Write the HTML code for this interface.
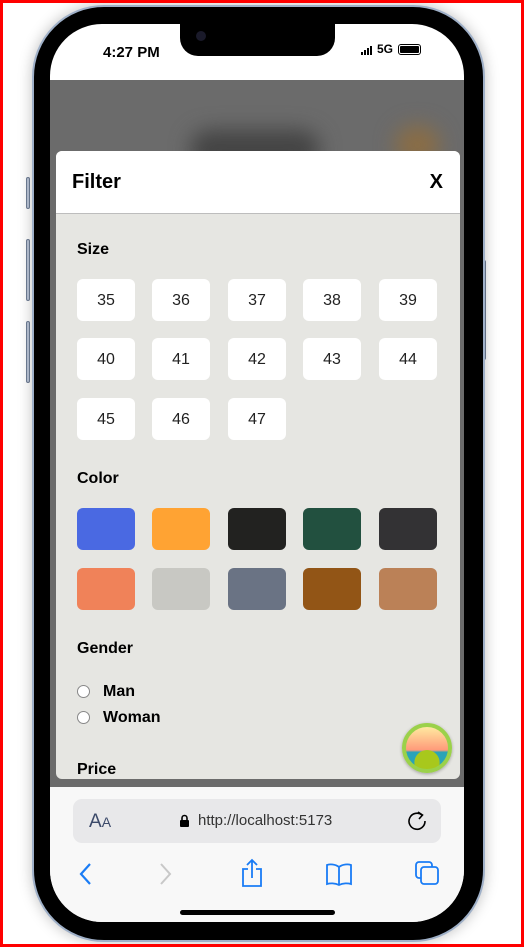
<!DOCTYPE html>
<html><head><meta charset="utf-8"><style>
*{margin:0;padding:0;box-sizing:border-box}
body{width:524px;height:947px;overflow:hidden;background:#fff;font-family:"Liberation Sans",sans-serif;position:relative}
.frame{position:absolute;left:0;top:0;width:524px;height:947px;border:3px solid #f00;z-index:20;pointer-events:none}
.btn{position:absolute;width:4px;background:#b9c4d6;border:1px solid #6f7d95;border-radius:2px}
.phone{position:absolute;left:32px;top:5px;width:453px;height:937px;border-radius:72px;background:#000;border:2px solid #9fb0c8;box-shadow:0 0 14px rgba(0,0,0,.25)}
.screen{position:absolute;left:50px;top:24px;width:414px;height:898px;border-radius:52px;background:#fff;overflow:hidden}
.notch{position:absolute;left:180px;top:24px;width:155px;height:32px;background:#000;border-radius:0 0 18px 18px;z-index:5}
.time{position:absolute;left:103px;top:44px;font-weight:bold;font-size:15px;z-index:6}
.overlay{position:absolute;left:0;top:56px;width:414px;height:707px;background:#6b6b6b}
.blob1{position:absolute;left:140px;top:50px;width:130px;height:40px;background:#444;filter:blur(10px);border-radius:20px}
.blob2{position:absolute;left:345px;top:45px;width:45px;height:40px;background:#8a6d45;filter:blur(10px);border-radius:50%}
.modal{position:absolute;left:6px;top:71px;width:404px;height:628px;background:#e6e6e2;border-radius:6px;overflow:hidden}
.head{height:63px;background:#fff;border-bottom:1px solid #bdbdbd;position:relative}
.head h1{position:absolute;left:16px;top:20px;font-size:20px}
.head span{position:absolute;right:17px;top:20px;font-size:20px;font-weight:bold}
.lbl{position:absolute;left:21px;font-weight:bold;font-size:16px}
.sz{position:absolute;width:58px;height:42px;background:#fff;border-radius:6px;font-size:16px;text-align:center;line-height:44px;color:#222}
.sw{position:absolute;width:58px;height:42px;border-radius:6px}
.rad{position:absolute;left:21px;width:13px;height:13px;border-radius:50%;background:#fff;border:1px solid #888}
.rt{position:absolute;left:47px;font-weight:bold;font-size:16px}
.bar{position:absolute;left:0;top:763px;width:414px;height:140px;background:#f8f8f8}
.url{position:absolute;left:23px;top:12px;width:368px;height:44px;background:#e8e8ea;border-radius:9px}
.home{position:absolute;left:130px;top:123px;width:155px;height:5px;background:#000;border-radius:3px}
</style></head><body>
<div class="btn" style="left:26px;top:177px;height:32px"></div>
<div class="btn" style="left:26px;top:239px;height:62px"></div>
<div class="btn" style="left:26px;top:321px;height:62px"></div>
<div class="btn" style="left:482px;top:260px;height:100px"></div>
<div class="phone"></div>
<div class="screen">
 <div class="overlay"><div class="blob1"></div><div class="blob2"></div>
  <div class="modal">
   <div class="head"><h1>Filter</h1><span>X</span></div>
   <div class="lbl" style="top:90px">Size</div>
   <div class="sz" style="left:21px;top:128px">35</div><div class="sz" style="left:96px;top:128px">36</div><div class="sz" style="left:172px;top:128px">37</div><div class="sz" style="left:247px;top:128px">38</div><div class="sz" style="left:323px;top:128px">39</div>
   <div class="sz" style="left:21px;top:187px">40</div><div class="sz" style="left:96px;top:187px">41</div><div class="sz" style="left:172px;top:187px">42</div><div class="sz" style="left:247px;top:187px">43</div><div class="sz" style="left:323px;top:187px">44</div>
   <div class="sz" style="left:21px;top:247px">45</div><div class="sz" style="left:96px;top:247px">46</div><div class="sz" style="left:172px;top:247px">47</div>
   <div class="lbl" style="top:319px">Color</div>
   <div class="sw" style="left:21px;top:357px;background:#4a69e2"></div><div class="sw" style="left:96px;top:357px;background:#ffa333"></div><div class="sw" style="left:172px;top:357px;background:#222220"></div><div class="sw" style="left:247px;top:357px;background:#22503f"></div><div class="sw" style="left:323px;top:357px;background:#333234"></div>
   <div class="sw" style="left:21px;top:417px;background:#f08259"></div><div class="sw" style="left:96px;top:417px;background:#c8c8c3"></div><div class="sw" style="left:172px;top:417px;background:#6a7384"></div><div class="sw" style="left:247px;top:417px;background:#925516"></div><div class="sw" style="left:323px;top:417px;background:#bb8157"></div>
   <div class="lbl" style="top:489px">Gender</div>
   <div class="rad" style="top:534px"></div><div class="rt" style="top:532px">Man</div>
   <div class="rad" style="top:560px"></div><div class="rt" style="top:558px">Woman</div>
   <div class="lbl" style="top:610px">Price</div>
   <div style="position:absolute;left:346px;top:572px;width:50px;height:50px;border-radius:50%;background:radial-gradient(circle at 50% 85%,#a8c81c 0 30%,transparent 31%),linear-gradient(#ffe9a0,#ff9a7a 55%,#2aa3b8 60%,#2aa3b8);border:4px solid #9bd14a;box-shadow:0 1px 3px rgba(0,0,0,.3)"></div>
  </div>
 </div>
 <div class="bar">
  <div class="url">
   <span style="position:absolute;left:16px;top:12px;font-size:19px;color:#3c4a6a">A<span style="font-size:14px">A</span></span>
   <svg style="position:absolute;left:106px;top:15px" width="11" height="14" viewBox="0 0 11 14"><rect x="1" y="6" width="9" height="7" rx="1" fill="#000"/><path d="M3 6V4a2.5 2.5 0 015 0v2" stroke="#000" stroke-width="1.6" fill="none"/></svg>
   <span style="position:absolute;left:125px;top:13px;font-size:15px;color:#333">http://localhost:5173</span>
   <svg style="position:absolute;left:333px;top:11px" width="22" height="22" viewBox="0 0 22 22"><path d="M16 5a8 8 0 1 0 3 6" stroke="#000" stroke-width="1.6" fill="none"/><path d="M12 2l4.5 3-3.5 4" stroke="#000" stroke-width="1.6" fill="none"/></svg>
  </div>
  <svg style="position:absolute;left:28px;top:75px" width="14" height="24" viewBox="0 0 14 24"><path d="M12 2L3 12l9 10" stroke="#1a7cf5" stroke-width="2.2" fill="none"/></svg>
  <svg style="position:absolute;left:109px;top:75px" width="14" height="24" viewBox="0 0 14 24"><path d="M2 2l9 10-9 10" stroke="#c8c8c8" stroke-width="2" fill="none"/></svg>
  <svg style="position:absolute;left:190px;top:71px" width="24" height="30" viewBox="0 0 24 30"><path d="M8 11H3v17h18V11h-5M12 20V2M7 7l5-5 5 5" stroke="#1a7cf5" stroke-width="1.8" fill="none"/></svg>
  <svg style="position:absolute;left:275px;top:75px" width="28" height="24" viewBox="0 0 28 24"><path d="M14 5C10 2 5 2 2 3v19c3-1 8-1 12 1 4-2 9-2 12-1V3c-3-1-8-1-12 2zM14 5v18" stroke="#1a7cf5" stroke-width="1.8" fill="none"/></svg>
  <svg style="position:absolute;left:364px;top:73px" width="26" height="26" viewBox="0 0 26 26"><rect x="2" y="2" width="16" height="16" rx="3" stroke="#1a7cf5" stroke-width="1.8" fill="none"/><rect x="7" y="7" width="17" height="17" rx="3" stroke="#1a7cf5" stroke-width="1.8" fill="#f8f8f8"/></svg>
  <div class="home"></div>
 </div>
</div>
<div class="notch"></div>
<div style="position:absolute;left:196px;top:31px;width:10px;height:10px;border-radius:50%;background:#1a1a2a;z-index:6"></div>
<div class="time">4:27 PM</div>
<div style="position:absolute;left:361px;top:44px;z-index:6;font-weight:bold;font-size:12px;display:flex;align-items:flex-end;gap:1px">
 <i style="width:2px;height:3px;background:#000"></i><i style="width:2px;height:5px;background:#000"></i><i style="width:2px;height:7px;background:#000"></i><i style="width:2px;height:9px;background:#000"></i>
 <span style="margin-left:4px;line-height:11px">5G</span>
 <span style="margin-left:4px;width:23px;height:11px;border:1.5px solid #000;border-radius:3px;padding:1px;display:inline-block"><span style="display:block;width:100%;height:100%;background:#000;border-radius:1px"></span></span>
</div>
<div class="frame"></div>
</body></html>
